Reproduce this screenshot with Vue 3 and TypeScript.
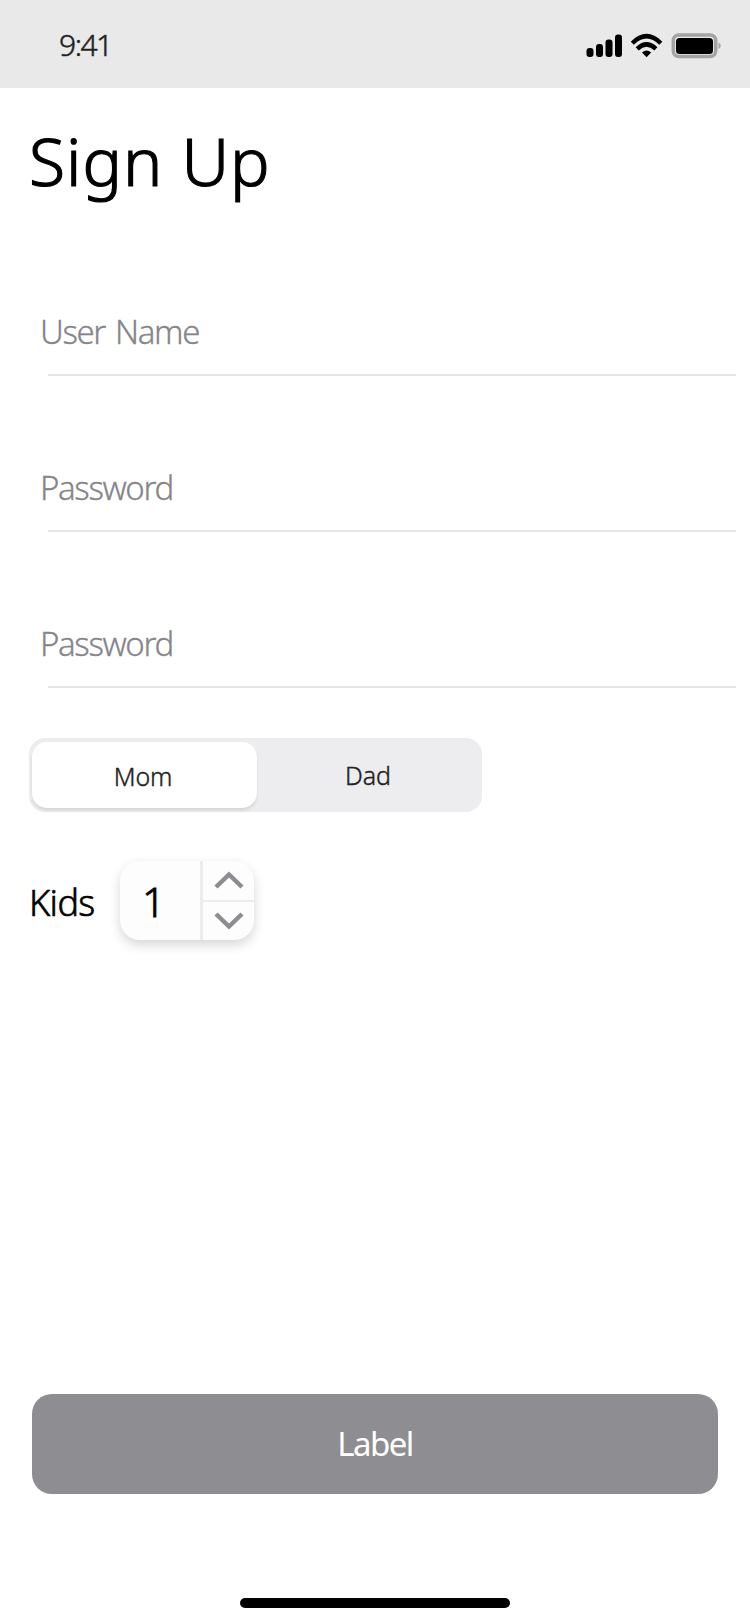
<script setup lang="ts">
import { ref } from 'vue'

interface Field {
  id: string
  label: string
  type: string
}

const fields: Field[] = [
  { id: 'user', label: 'User Name', type: 'text' },
  { id: 'password', label: 'Password', type: 'password' },
  { id: 'confirm', label: 'Password', type: 'password' },
]
const values = ref<Record<string, string>>({ user: '', password: '', confirm: '' })
const roles = ['Mom', 'Dad']
const role = ref('Mom')
const kids = ref(1)
</script>

<template>
  <div class="screen">
    <header class="status">
      <span class="time">9:41</span>
      <svg class="indicators" width="140" height="32" viewBox="0 0 140 32">
        <rect x="0.500" y="15" width="7" height="9" rx="3" />
        <rect x="10" y="11" width="7" height="13" rx="3" />
        <rect x="19.500" y="6.500" width="7" height="17.500" rx="3" />
        <rect x="29" y="1.500" width="7" height="22.500" rx="3" />
        <g fill="none" stroke="#000" stroke-width="4.400">
          <path d="M46.300 10.200Q60.500 -3.800 74.800 10.200" />
          <path d="M51.200 15.800Q60.500 7 69.900 15.800" />
        </g>
        <path d="M56 19.600Q60.600 15.300 65.200 19.600L60.600 24.200Z" />
        <rect x="87.300" y="2" width="42.400" height="21.500" rx="5.500" fill="none" stroke="#a3a3a3" stroke-width="3.500" />
        <rect x="90" y="5" width="37" height="16" rx="3.500" />
        <path d="M132.500 9.500Q134.800 10.500 134.800 12.800T132.500 16Z" fill="#a8a8a8" />
      </svg>
    </header>

    <main class="content">
      <h1 class="title">Sign Up</h1>
      <label v-for="f in fields" :key="f.id" class="field">
        <input v-model="values[f.id]" :class="f.id" :type="f.type" :placeholder="f.label" />
      </label>

      <div class="segments">
        <button
          v-for="r in roles"
          :key="r"
          class="segment"
          :class="{ active: role === r }"
          @click="role = r"
        >{{ r }}</button>
      </div>

      <div class="kids">
        <span class="kids-label">Kids</span>
        <div class="stepper">
          <span class="count">{{ kids }}</span>
          <div class="arrows">
            <button class="arrow" aria-label="More" @click="kids++">
              <svg width="30" height="20" viewBox="0 0 30 20"><path d="M2 17L15 4.500L28 17" /></svg>
            </button>
            <button class="arrow" aria-label="Fewer" @click="kids = Math.max(0, kids - 1)">
              <svg width="30" height="20" viewBox="0 0 30 20"><path d="M2 3L15 15.500L28 3" /></svg>
            </button>
          </div>
        </div>
      </div>
    </main>

    <footer class="footer">
      <button class="submit">Label</button>
      <div class="home"></div>
    </footer>
  </div>
</template>

<style>
body {
  margin: 0;
  background: #fff;
}
</style>

<style scoped>
.screen {
  display: flex;
  flex-direction: column;
  box-sizing: border-box;
  width: 750px;
  height: 1624px;
  overflow: hidden;
  background: #fff;
  color: #000;
  font-family: "Noto Sans", "Open Sans", sans-serif;
}
button,
input {
  margin: 0;
  padding: 0;
  border: 0;
  background: none;
  font: inherit;
  color: inherit;
}
.status {
  display: flex;
  justify-content: space-between;
  box-sizing: border-box;
  height: 88px;
  padding: 33px 24px 0 59px;
  background: #e9e9e9;
}
.time {
  height: 24px;
  line-height: 23px;
  font-size: 30px;
  font-weight: 300;
  letter-spacing: -1.500px;
  color: #1c1c1c;
  -webkit-text-stroke: 0.500px #2b2b2b;
}
.content {
  flex: 1;
  padding-left: 28px;
}
.title {
  margin: 0;
  height: 174px;
  padding: 32px 0 0 1px;
  box-sizing: border-box;
  font-size: 66px;
  font-weight: 300;
  line-height: 80px;
  letter-spacing: 1px;
  -webkit-text-stroke: 1.200px #000;
}
.field {
  display: flex;
  flex-direction: column;
  height: 156px;
}
.field input {
  height: 50px;
  margin: 45px 0 17px 12px;
  font-size: 33px;
  font-weight: 300;
  line-height: 50px;
  letter-spacing: -1.400px;
  word-spacing: 3px;
  outline: none;
}
.field input::placeholder {
  color: #85858a;
  opacity: 1;
  -webkit-text-stroke: 0.300px #85858a;
}
.field::after {
  content: "";
  height: 2px;
  margin: 0 14px 0 20px;
  background: #e6e6e6;
}
.segments {
  display: flex;
  box-sizing: border-box;
  width: 453px;
  height: 74px;
  margin: 8px 0 0 1px;
  padding: 4px 3px 4px 3px;
  border-radius: 16px;
  background: #ededef;
}
.segment {
  flex: 1;
  padding-bottom: 1px;
  border-radius: 15px;
  font-size: 25px;
  font-weight: 300;
  letter-spacing: -0.100px;
  color: #222;
  -webkit-text-stroke: 0.400px #222;
}
.segment.active {
  padding: 1px 3px 0 0;
  background: #fff;
  box-shadow: 0 3px 3px rgba(0, 0, 0, 0.09);
}
.kids {
  display: flex;
  align-items: center;
  height: 79px;
  margin-top: 49px;
}
.kids-label {
  width: 91px;
  padding: 3px 0 0 1px;
  font-size: 36px;
  font-weight: 300;
  letter-spacing: -0.600px;
  -webkit-text-stroke: 0.600px #000;
}
.stepper {
  display: flex;
  width: 134px;
  height: 79px;
  border-radius: 20px;
  background: #fdfdfd;
  box-shadow: 0 5px 12px rgba(0, 0, 0, 0.16);
}
.count {
  width: 80px;
  box-sizing: border-box;
  padding-left: 22px;
  font-size: 41px;
  font-weight: 300;
  line-height: 81px;
  -webkit-text-stroke: 0.800px #000;
}
.arrows {
  flex: 1;
  display: flex;
  flex-direction: column;
  border-left: 3px solid #ececee;
}
.arrow {
  flex: 1;
  display: grid;
  place-items: center;
}
.arrow + .arrow {
  border-top: 2px solid #ececee;
}
.arrow svg {
  fill: none;
  stroke: #8c8c91;
  stroke-width: 4.500;
}
.footer {
  display: flex;
  flex-direction: column;
  align-items: center;
  height: 230px;
}
.submit {
  width: 686px;
  height: 100px;
  padding-bottom: 2px;
  border-radius: 20px;
  background: #8e8d92;
  color: #fff;
  font-size: 33px;
  letter-spacing: -1.500px;
}
.home {
  width: 270px;
  height: 10px;
  margin-top: 104px;
  border-radius: 5px;
  background: #000;
}
</style>
